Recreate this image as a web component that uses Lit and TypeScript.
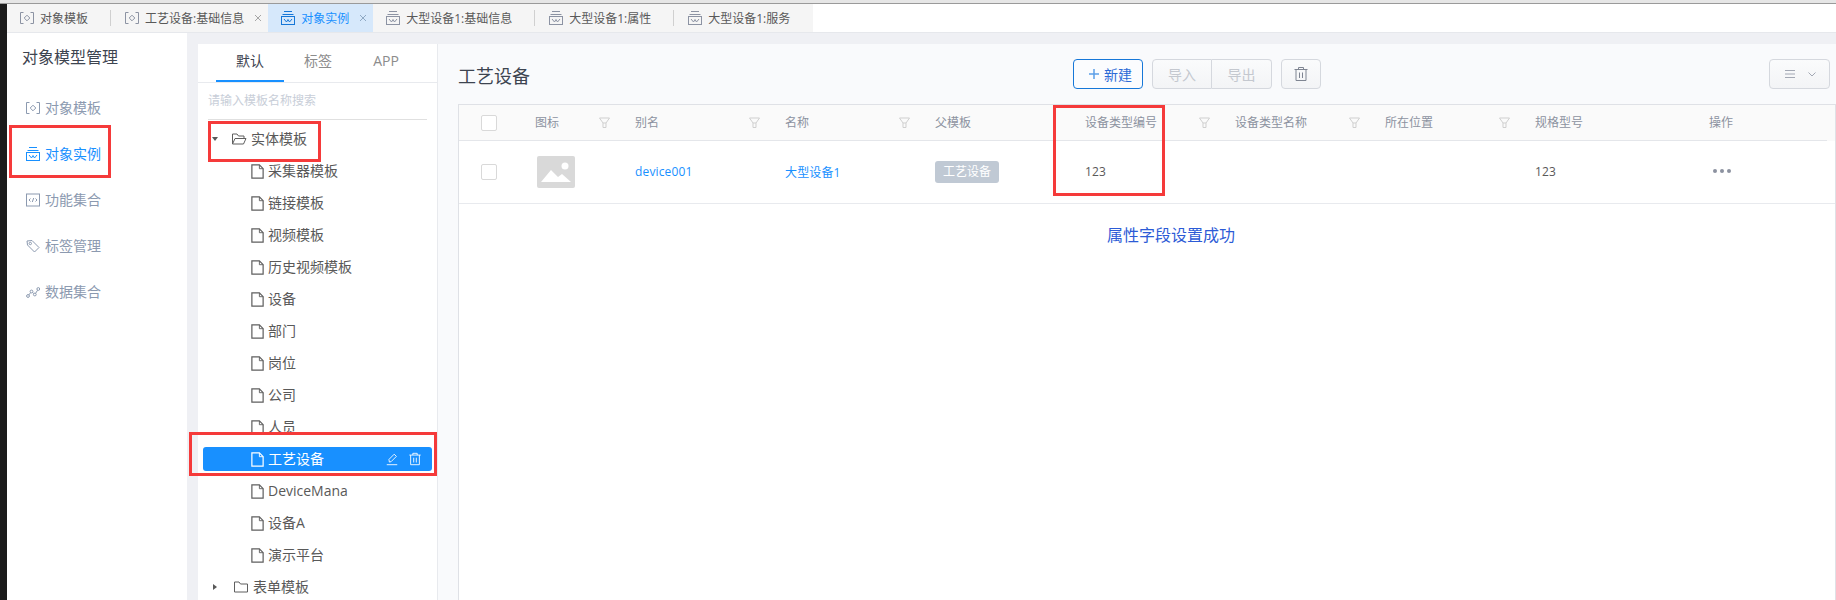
import { LitElement, html, css, svg } from "lit";
import { customElement } from "lit/decorators.js";

const FONT = css`"Open Sans", "Noto Sans CJK SC", sans-serif`;

const icon = (body: unknown, size = 16, view = 16) => html`<svg
  class="icon"
  width=${size}
  height=${size}
  viewBox="0 0 ${view} ${view}"
  fill="none"
  stroke="currentColor"
  stroke-width="1"
>${body}</svg>`;

const modelIcon = () =>
  icon(svg`<path d="M3.500 1.500H.5v11h3M10.500 1.500h3v11h-3"/><path d="M7 4.200 9.800 7 7 9.800 4.200 7z"/>`, 14, 14);
const instanceIcon = () =>
  icon(svg`<path d="M3 .5h8M1.500 3.500h11"/><rect x=".5" y="5.500" width="13" height="8"/><path d="M3 8l2.500 3L7 8.500 8.500 11 11 8"/>`, 14, 14);
const codeIcon = () =>
  icon(svg`<rect x=".5" y="1" width="13" height="12"/><path d="M4.500 5.500 3 7l1.500 1.500M9.500 5.500 11 7 9.500 8.500M7.700 5 6.300 9"/>`, 14, 14);
const tagIcon = () =>
  icon(svg`<path d="M1 2 6 1.500l7 7-4.500 4.500-7-7z"/><circle cx="4.300" cy="4.500" r="1.200"/>`, 14, 14);
const dataIcon = () =>
  icon(svg`<circle cx="2" cy="11" r="1.400"/><circle cx="5.500" cy="6.500" r="1.400"/><circle cx="8.800" cy="9.500" r="1.400"/><circle cx="12.300" cy="4" r="1.400"/><path d="m2.900 9.900 1.700-2.300M6.600 7.400l1.200 1.200M9.600 8.300l2-3.100"/>`, 14, 14);
const fileIcon = () =>
  icon(svg`<path d="M2 1h8l4 4v10H2z" stroke-width="1.300"/><path d="M10 1v4h4"/>`);
const folderOpenIcon = () =>
  icon(svg`<path d="M1.500 13V3h4.500l1.500 2h5.500v2.500"/><path d="M1.500 13l2.500-5.500h11L12.500 13z"/>`);
const folderIcon = () => icon(svg`<path d="M1.500 13V3h4.500l1.500 2h7v8z"/>`);
const closeIcon = () => icon(svg`<path d="M1 1l6 6M7 1 1 7"/>`, 8, 8);
const filterIcon = () => icon(svg`<path d="M.5 1h10L7 6v4.500H4V6z"/><path d="M4 6h3"/>`, 12, 12);
const trashIcon = () =>
  icon(svg`<path d="M1.500 3.500h13M5.500 3.500V1.500h5v2M3 3.500v11h10v-11M6.500 6.500v5.500M9.500 6.500v5.500"/>`);
const editIcon = () => icon(svg`<path d="M5 11.500 4.500 8.500 10.500 2.500l2.500 2.500-6 6zM2 14.500h12"/>`);

const tabs = [
  { label: "对象模板", icon: modelIcon, sep: true },
  { label: "工艺设备:基础信息", icon: modelIcon, close: true },
  { label: "对象实例", icon: instanceIcon, close: true, active: true },
  { label: "大型设备1:基础信息", icon: instanceIcon, sep: true },
  { label: "大型设备1:属性", icon: instanceIcon, sep: true },
  { label: "大型设备1:服务", icon: instanceIcon },
];

const navItems = [
  { label: "对象模板", icon: modelIcon },
  { label: "对象实例", icon: instanceIcon, active: true },
  { label: "功能集合", icon: codeIcon },
  { label: "标签管理", icon: tagIcon },
  { label: "数据集合", icon: dataIcon },
];

const leaves = [
  "采集器模板",
  "链接模板",
  "视频模板",
  "历史视频模板",
  "设备",
  "部门",
  "岗位",
  "公司",
  "人员",
  "工艺设备",
  "DeviceMana",
  "设备A",
  "演示平台",
];

const columns = [
  { label: "" },
  { label: "图标", filter: true },
  { label: "别名", filter: true },
  { label: "名称", filter: true },
  { label: "父模板" },
  { label: "设备类型编号", filter: true },
  { label: "设备类型名称", filter: true },
  { label: "所在位置", filter: true },
  { label: "规格型号" },
  { label: "操作" },
];

@customElement("app-root")
export class AppRoot extends LitElement {
  static styles = css`
    :host {
      display: block;
      position: relative;
      width: 1836px;
      height: 600px;
      overflow: hidden;
      background: #fff;
      font-family: ${FONT};
      font-size: 14px;
    }
    .icon {
      display: block;
      flex: 0 0 auto;
    }
    .chrome {
      height: 3px;
      background: #e6e6e6;
      border-bottom: 1px solid #9a9a9a;
    }
    .shell {
      display: flex;
      height: 596px;
    }
    .edge {
      width: 7px;
      background: #1b1b1b;
      flex: 0 0 auto;
    }
    .page {
      flex: 1;
      min-width: 0;
      display: flex;
      flex-direction: column;
    }
    .tabbar {
      height: 28px;
      display: flex;
      border-bottom: 1px solid #e6e8ec;
      flex: 0 0 auto;
    }
    .tab {
      position: relative;
      display: flex;
      align-items: center;
      gap: 6px;
      padding: 0 23px 0 13px;
      background: #f5f5f5;
      font-size: 12px;
      color: #595959;
      white-space: nowrap;
    }
    .tab.sep + .tab {
      padding-left: 14px;
    }
    .tab > .icon {
      color: #8c93a3;
    }
    .tab.sep::after {
      content: "";
      position: absolute;
      right: 0;
      top: 6px;
      height: 16px;
      width: 1px;
      background: #d0d0d0;
    }
    .tab.closable {
      padding-right: 6px;
    }
    .tab .x {
      margin-left: 4px;
      color: #a6a6a6;
    }
    .tab.active {
      background: #d6e8fb;
      color: #1890ff;
    }
    .tab.active > .icon {
      color: #1677d8;
    }
    .tab.active .x {
      color: #8fa9c4;
    }
    .tab-fill {
      flex: 1;
    }
    .body {
      flex: 1;
      display: flex;
      min-height: 0;
      background: #eff0f4;
    }
    .side {
      width: 180px;
      flex: 0 0 auto;
      background: #fff;
    }
    .side h2 {
      margin: 0;
      padding: 13px 0 0 15px;
      font-size: 16px;
      font-weight: 400;
      line-height: 22px;
      height: 52px;
      box-sizing: border-box;
      color: #3d4450;
    }
    .nav {
      display: flex;
      align-items: center;
      height: 46px;
      padding-left: 19px;
      gap: 5px;
      color: #8c9ab0;
    }
    .nav span {
      padding-bottom: 2px;
    }
    .nav.active {
      color: #1890ff;
    }
    .tree {
      width: 239px;
      margin: 11px 0 0 11px;
      flex: 0 0 auto;
      background: #fff;
      display: flex;
      flex-direction: column;
    }
    .tree-tabs {
      display: flex;
      height: 38px;
      padding-left: 18px;
      border-bottom: 1px solid #e8eaee;
      flex: 0 0 auto;
    }
    .tree-tab {
      width: 68px;
      height: 38px;
      line-height: 34px;
      text-align: center;
      color: #8c8c8c;
      box-sizing: border-box;
    }
    .tree-tab.active {
      color: #3d4450;
      border-bottom: 2px solid #1890ff;
    }
    .search {
      margin: 0 10px 3px;
      height: 36px;
      line-height: 36px;
      font-size: 12px;
      color: #c8ced8;
      border-bottom: 1px solid #e0e0e0;
      flex: 0 0 auto;
    }
    .row {
      display: flex;
      align-items: center;
      height: 32px;
      color: #595959;
      white-space: nowrap;
      flex: 0 0 auto;
    }
    .row .icon {
      color: #5f5f5f;
    }
    .row span {
      padding-bottom: 2px;
    }
    .root {
      padding-left: 14px;
    }
    .row .caret {
      width: 0;
      height: 0;
      padding: 0;
      flex: 0 0 auto;
    }
    .caret.down {
      border-left: 3.5px solid transparent;
      border-right: 3.5px solid transparent;
      border-top: 4px solid #595959;
      margin-right: 13px;
    }
    .caret.right {
      border-top: 3.5px solid transparent;
      border-bottom: 3.5px solid transparent;
      border-left: 4px solid #595959;
      margin: 0 16px 0 1px;
    }
    .root .icon {
      margin-right: 4px;
    }
    .leaf {
      padding-left: 52px;
    }
    .leaf .icon {
      width: 15px;
      height: 15px;
      margin-right: 3px;
    }
    .leaf-box {
      display: flex;
      align-items: center;
      flex: 1;
      height: 24px;
      margin: 0 5px;
      padding-left: 47px;
      padding-right: 10px;
      background: #1890ff;
      border-radius: 3px;
      color: #fff;
    }
    .leaf-box .icon {
      width: 15px;
      height: 15px;
      color: #fff;
      margin-right: 3px;
    }
    .leaf-box .name {
      flex: 1;
    }
    .row .tool {
      margin-left: 9px;
      padding: 0;
    }
    .row .tool .icon {
      width: 14px;
      height: 14px;
      margin: 0;
    }
    .main {
      flex: 1;
      min-width: 0;
      margin-top: 11px;
      background: #f9fafc;
      display: flex;
      flex-direction: column;
      padding-left: 20px;
      border-left: 1px solid #e8eaee;
    }
    .toolbar {
      height: 60px;
      display: flex;
      align-items: center;
      padding-right: 6px;
      flex: 0 0 auto;
    }
    .toolbar h1 {
      margin: 2px 0 0;
      font-size: 18px;
      font-weight: 400;
      color: #3d4450;
      width: 615px;
    }
    .btn {
      height: 30px;
      box-sizing: border-box;
      display: flex;
      align-items: center;
      justify-content: center;
      border: 1px solid #d5d8de;
      border-radius: 4px;
      background: linear-gradient(#fafbfc, #f3f4f6);
      font-size: 14px;
      color: #c4c8cf;
    }
    .btn.primary {
      width: 70px;
      justify-content: flex-start;
      padding-left: 15px;
      border-color: #1677d8;
      background: #fbfcfe;
      color: #2c6ad6;
      gap: 5px;
      margin-right: 9px;
    }
    .btn.primary .icon {
      color: #5c9ee8;
    }
    .group {
      display: flex;
      margin-right: 9px;
    }
    .group .btn {
      width: 60px;
    }
    .group .btn:first-child {
      border-radius: 4px 0 0 4px;
    }
    .group .btn:last-child {
      border-radius: 0 4px 4px 0;
      border-left: 0;
    }
    .btn.del {
      width: 40px;
      color: #7f8592;
    }
    .btn.menu {
      width: 61px;
      margin-left: auto;
      gap: 10px;
      color: #a3a8b4;
    }
    .table {
      flex: 1;
      background: #fff;
      border: 1px solid #dfe1e6;
      border-bottom: 0;
      min-height: 0;
    }
    .head {
      background: #fafafa;
    }
    .grid {
      display: grid;
      grid-template-columns: 76px 100px repeat(6, 150px) 174px 1fr;
      align-items: center;
    }
    .head .grid {
      height: 36px;
      box-sizing: border-box;
      margin-right: 8px;
      border-bottom: 1px solid #e4e6ea;
      font-size: 12px;
      color: #8c92a0;
    }
    .th {
      display: flex;
      align-items: center;
      justify-content: space-between;
      padding-right: 24px;
    }
    .th span {
      padding-bottom: 2px;
    }
    .th .icon {
      color: #cfcfcf;
    }
    .body-row {
      height: 63px;
      box-sizing: border-box;
      border-bottom: 1px solid #e8eaee;
      font-size: 12px;
      color: #595959;
    }
    .cell {
      padding-bottom: 1px;
      letter-spacing: 0.15px;
    }
    .box {
      width: 16px;
      height: 16px;
      box-sizing: border-box;
      margin-left: 22px;
      border: 1px solid #d9d9d9;
      border-radius: 2px;
      background: #fff;
    }
    .thumb {
      display: block;
      margin-left: 2px;
    }
    .link {
      color: #1890ff;
    }
    .tag {
      display: inline-block;
      width: 64px;
      height: 22px;
      line-height: 21px;
      text-align: center;
      border-radius: 3px;
      background: #c0c9d4;
      color: #fff;
    }
    .more {
      display: flex;
      gap: 3px;
      margin-left: 4px;
      margin-top: -3px;
    }
    .more i {
      width: 4px;
      height: 4px;
      border-radius: 50%;
      background: #8c92a0;
    }
    .toast {
      position: absolute;
      left: 1107px;
      top: 224px;
      font-size: 16px;
      line-height: 22px;
      color: #2c5bd6;
    }
    .mark {
      position: absolute;
      box-sizing: border-box;
      border: 3px solid #f53a3a;
      pointer-events: none;
    }
    .m1 {
      left: 9px;
      top: 125px;
      width: 102px;
      height: 53px;
    }
    .m2 {
      left: 208px;
      top: 121px;
      width: 113px;
      height: 41px;
    }
    .m3 {
      left: 1053px;
      top: 105px;
      width: 112px;
      height: 91px;
    }
    .m4 {
      left: 189px;
      top: 432px;
      width: 248px;
      height: 44px;
    }
  `;

  private renderTab(t: (typeof tabs)[number]) {
    const cls = ["tab", t.sep ? "sep" : "", t.close ? "closable" : "", t.active ? "active" : ""].join(" ");
    return html`<div class=${cls}>
      ${t.icon()}<span>${t.label}</span>
      ${t.close ? html`<span class="x">${closeIcon()}</span>` : ""}
    </div>`;
  }

  private renderLeaf(name: string) {
    if (name === "工艺设备") {
      return html`<div class="row">
        <div class="leaf-box">
          ${fileIcon()}<span class="name">${name}</span>
          <span class="tool">${editIcon()}</span>
          <span class="tool">${trashIcon()}</span>
        </div>
      </div>`;
    }
    return html`<div class="row leaf">${fileIcon()}<span>${name}</span></div>`;
  }

  render() {
    return html`
      <div class="chrome"></div>
      <div class="shell">
        <div class="edge"></div>
        <div class="page">
          <div class="tabbar">
            ${tabs.map((t) => this.renderTab(t))}
            <div class="tab-fill"></div>
          </div>
          <div class="body">
            <aside class="side">
              <h2>对象模型管理</h2>
              ${navItems.map(
                (n) => html`<div class="nav ${n.active ? "active" : ""}">${n.icon()}<span>${n.label}</span></div>`
              )}
            </aside>
            <section class="tree">
              <div class="tree-tabs">
                <div class="tree-tab active">默认</div>
                <div class="tree-tab">标签</div>
                <div class="tree-tab">APP</div>
              </div>
              <div class="search">请输入模板名称搜索</div>
              <div class="row root"><span class="caret down"></span>${folderOpenIcon()}<span>实体模板</span></div>
              ${leaves.map((l) => this.renderLeaf(l))}
              <div class="row root"><span class="caret right"></span>${folderIcon()}<span>表单模板</span></div>
            </section>
            <section class="main">
              <div class="toolbar">
                <h1>工艺设备</h1>
                <div class="btn primary">
                  ${icon(svg`<path d="M5 0v10M0 5h10" stroke-width="1.500"/>`, 10, 10)}
                  <span>新建</span>
                </div>
                <div class="group">
                  <div class="btn">导入</div>
                  <div class="btn">导出</div>
                </div>
                <div class="btn del">${trashIcon()}</div>
                <div class="btn menu">
                  ${icon(svg`<path d="M2 3.500h10M2 7h10M2 10.500h10"/>`, 14, 14)}
                  ${icon(svg`<path d="M1.500 3.500 5 7l3.500-3.500"/>`, 10, 10)}
                </div>
              </div>
              <div class="table">
                <div class="head">
                  <div class="grid">
                    ${columns.map((c, i) =>
                      i === 0
                        ? html`<div><div class="box"></div></div>`
                        : html`<div class="th"><span>${c.label}</span>${c.filter ? filterIcon() : ""}</div>`
                    )}
                  </div>
                </div>
                <div class="grid body-row">
                  <div><div class="box"></div></div>
                  <div>
                    <svg class="thumb" width="38" height="32" viewBox="0 0 38 32">
                      <rect width="38" height="32" rx="2" fill="#d9d9d9" />
                      <circle cx="28" cy="10" r="3.500" fill="#fff" />
                      <path d="M4 26 14 14l7 7 4-3 9 8z" fill="#fff" />
                    </svg>
                  </div>
                  <div class="cell link">device001</div>
                  <div class="cell link">大型设备1</div>
                  <div><span class="tag">工艺设备</span></div>
                  <div class="cell">123</div>
                  <div></div>
                  <div></div>
                  <div class="cell">123</div>
                  <div class="more"><i></i><i></i><i></i></div>
                </div>
              </div>
            </section>
          </div>
        </div>
      </div>
      <div class="toast">属性字段设置成功</div>
      <div class="mark m1"></div>
      <div class="mark m2"></div>
      <div class="mark m3"></div>
      <div class="mark m4"></div>
    `;
  }
}
